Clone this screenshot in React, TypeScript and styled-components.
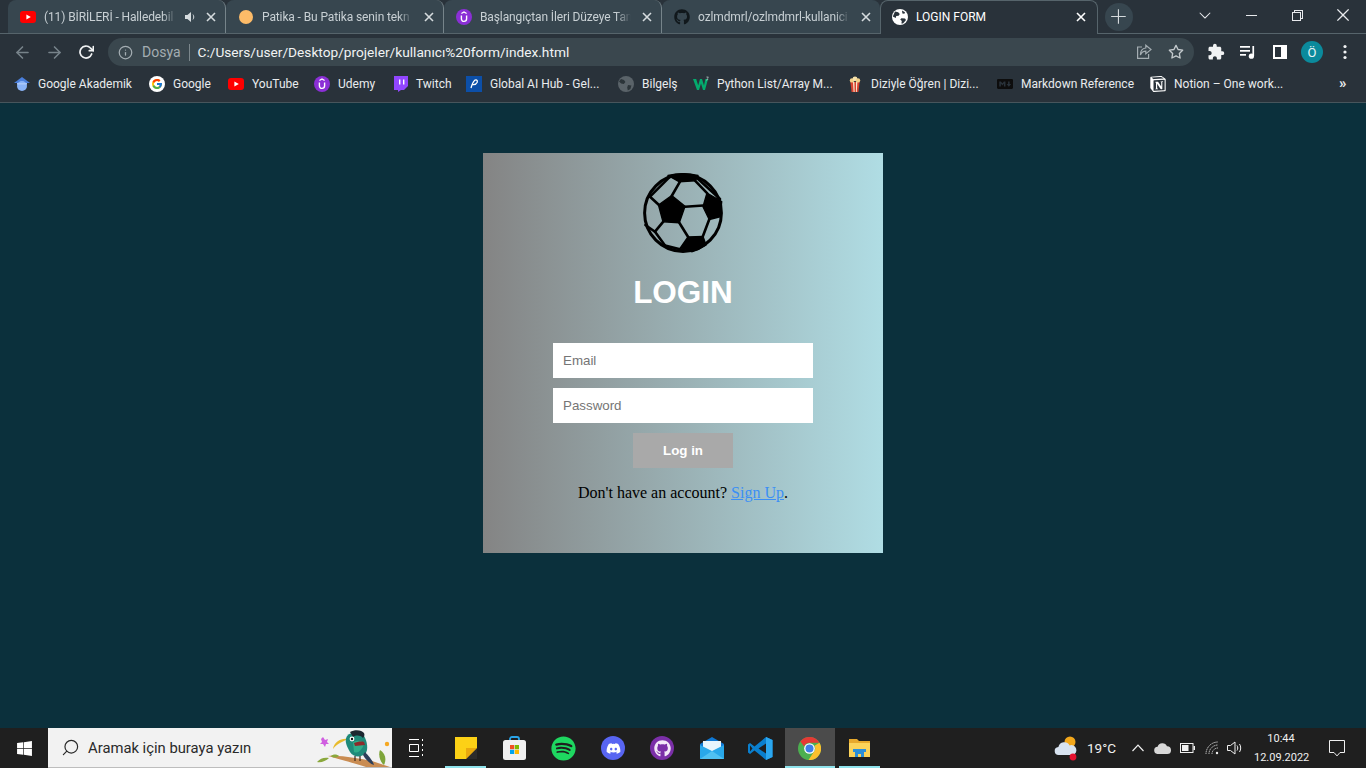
import React from "react";
import styled, { createGlobalStyle } from "styled-components";
import { FaGithub, FaSpotify, FaDiscord, FaWindows } from "react-icons/fa";
import { FcGoogle } from "react-icons/fc";
import { MdExtension } from "react-icons/md";
import { FiArrowLeft, FiArrowRight, FiInfo, FiStar, FiRotateCw, FiSearch } from "react-icons/fi";
import { SiNotion, SiMarkdown } from "react-icons/si";
import { VscChevronDown, VscChromeMinimize, VscChromeRestore, VscChromeClose, VscAdd } from "react-icons/vsc";

const Global = createGlobalStyle`
  html, body { margin: 0; padding: 0; height: 100%; overflow: hidden; }
  #root { height: 100%; }
  * { box-sizing: border-box; }
`;

const uiFont = `Roboto, "Noto Sans", "Liberation Sans", sans-serif`;

const Screen = styled.div`
  display: flex;
  flex-direction: column;
  height: 768px;
  width: 1366px;
  background: #0b303c;
  font-family: ${uiFont};
`;

const TabStrip = styled.div`
  display: flex;
  align-items: stretch;
  height: 34px;
  padding-left: 8px;
  background: #29323a;
  border-bottom: 1px solid #56646b;
  flex: none;
`;

const Tab = styled.div<{ $active?: boolean; $last?: boolean }>`
  display: flex;
  align-items: center;
  width: 218px;
  height: ${(p) => (p.$active ? "34px" : "33px")};
  padding: ${(p) => (p.$active ? "0 8px 2px 11px" : "0 6px 0 12px")};
  gap: 8px;
  background: ${(p) => (p.$active ? "#29323a" : "#37464f")};
  color: ${(p) => (p.$active ? "#ffffff" : "#c8d0d4")};
  border-radius: 8px 8px 0 0;
  border: ${(p) => (p.$active ? "1px solid #56646b" : "0")};
  border-bottom: 0;
  border-right: ${(p) =>
    p.$active ? "1px solid #56646b" : p.$last ? "0" : "1px solid #76848a"};
  font-size: 12px;
  white-space: nowrap;
  flex: none;
`;

const TabTitle = styled.span<{ $fade?: boolean }>`
  flex: 1;
  min-width: 0;
  ${(p) =>
    p.$fade
      ? "letter-spacing: -0.12px; mask-image: linear-gradient(to right, #000 90%, transparent 100%);"
      : ""}
`;

const TabClose = styled.span<{ $light?: boolean }>`
  display: flex;
  align-items: center;
  justify-content: center;
  width: 16px;
  height: 16px;
  flex: none;
  color: ${(p) => (p.$light ? "#ffffff" : "#d5dbde")};
`;

const NewTab = styled.div`
  display: flex;
  align-items: center;
  justify-content: center;
  width: 28px;
  height: 28px;
  margin: 3px 0 0 7px;
  border-radius: 50%;
  background: #37464f;
  color: #d4d9dc;
`;

const WindowControls = styled.div`
  display: flex;
  margin-left: auto;
  align-items: flex-start;
  color: #e8eaed;
`;

const WindowButton = styled.div`
  display: flex;
  align-items: center;
  justify-content: center;
  width: 46px;
  height: 30px;
`;

const Toolbar = styled.div`
  display: flex;
  align-items: center;
  height: 36px;
  padding: 0 0 0 6px;
  background: #29323a;
  flex: none;
`;

const NavButton = styled.div<{ $dim?: boolean; $w?: number }>`
  display: flex;
  align-items: center;
  justify-content: center;
  width: ${(p) => p.$w ?? 32}px;
  height: 28px;
  flex: none;
  color: ${(p) => (p.$dim ? "#77838a" : "#f1f3f4")};
`;

const Omnibox = styled.div`
  display: flex;
  align-items: center;
  width: 1086px;
  height: 28px;
  margin: 0 6px 0 6px;
  padding: 0 10px;
  border-radius: 14px;
  background: #3a474e;
  flex: none;
`;

const SiteLabel = styled.span`
  color: #a4adb2;
  font-size: 14px;
  margin-left: 9px;
  padding-right: 8px;
  border-right: 1px solid #7c878c;
  line-height: 17px;
`;

const Url = styled.span`
  color: #f1f3f4;
  margin-left: 8px;
  font-size: 13.7px;
  flex: 1;
`;

const OmniAction = styled.span`
  display: flex;
  margin-right: 16px;
`;

const Avatar = styled.div`
  display: flex;
  align-items: center;
  justify-content: center;
  width: 22px;
  height: 22px;
  border-radius: 50%;
  background: #0b8a9c;
  color: #e6f4f6;
  font-size: 13px;
`;

const Bookmarks = styled.div`
  display: flex;
  align-items: flex-start;
  height: 33px;
  padding: 6px 0 0 6px;
  background: #29323a;
  border-bottom: 1px solid #47555c;
  flex: none;
`;

const Bookmark = styled.div<{ $w: number }>`
  display: flex;
  align-items: center;
  gap: 8px;
  width: ${(p) => p.$w}px;
  height: 16px;
  padding-left: 8px;
  color: #e9ecee;
  font-size: 12px;
  white-space: nowrap;
  flex: none;
`;

const BookmarkIcon = styled.span`
  display: flex;
  width: 16px;
  height: 16px;
  align-items: center;
  justify-content: center;
  flex: none;
`;

const More = styled.span`
  color: #e9ecee;
  font-size: 15px;
  font-weight: 700;
  line-height: 14px;
`;

const Page = styled.main`
  flex: 1;
  display: flex;
  justify-content: center;
  align-items: flex-start;
  padding-top: 50px;
  background: #0b303c;
`;

const Card = styled.section`
  display: flex;
  flex-direction: column;
  align-items: center;
  width: 400px;
  height: 400px;
  padding-top: 20px;
  background: linear-gradient(to right, #848484, #b0dde4);
`;

const Title = styled.h1`
  margin: 19px 0 31px;
  height: 40px;
  font: bold 31.5px/40px "Liberation Sans", Arial, sans-serif;
  color: #ffffff;
`;

const Field = styled.input`
  display: block;
  width: 260px;
  height: 35px;
  margin-bottom: 10px;
  padding: 0 10px 1px;
  border: 0;
  outline: 0;
  background: #ffffff;
  font: 13.33px "Liberation Sans", Arial, sans-serif;
  &::placeholder { color: #757575; opacity: 1; }
`;

const Submit = styled.button`
  width: 100px;
  height: 35px;
  padding: 0 0 1px;
  border: 0;
  background: #a9a9a9;
  color: #ffffff;
  font: bold 13.33px "Liberation Sans", Arial, sans-serif;
`;

const Note = styled.p`
  margin: 16px 0 0;
  font: 16px/18px "Liberation Serif", "Times New Roman", serif;
  color: #000000;
`;

const NoteLink = styled.a`
  color: #3b8ff5;
  text-decoration: underline;
`;

const Taskbar = styled.footer`
  display: flex;
  align-items: stretch;
  height: 40px;
  background: #1f1f1f;
  flex: none;
`;

const StartButton = styled.div`
  display: flex;
  align-items: center;
  justify-content: center;
  width: 48px;
  color: #ffffff;
  flex: none;
`;

const SearchBox = styled.div`
  display: flex;
  align-items: center;
  position: relative;
  width: 344px;
  padding-left: 13px;
  background: #f2f2f2;
  border-bottom: 1px solid #bdbdbd;
  color: #2a2a2a;
  font-size: 14.8px;
  flex: none;
`;

const SearchText = styled.span`
  margin-left: 8px;
`;

const MirroredSearch = styled(FiSearch)`
  transform: scaleX(-1);
`;

const BirdArt = styled.svg`
  position: absolute;
  right: 0;
  top: 0;
`;

const TaskSlot = styled.div<{ $w?: number; $on?: boolean; $selected?: boolean }>`
  position: relative;
  display: flex;
  align-items: center;
  justify-content: center;
  width: ${(p) => p.$w ?? 49.2}px;
  background: ${(p) => (p.$selected ? "#4b4b4b" : "transparent")};
  flex: none;
  color: #fff;
  &::after {
    content: "";
    display: ${(p) => (p.$on ? "block" : "none")};
    position: absolute;
    left: ${(p) => (p.$selected ? "0" : "4px")};
    right: ${(p) => (p.$selected ? "0" : "4px")};
    bottom: 0;
    height: 2px;
    background: #8fe3ec;
  }
`;

const BadgeGlyph = styled.span`
  position: absolute;
  display: flex;
`;

const Tray = styled.div`
  display: flex;
  align-items: center;
  margin-left: auto;
  color: #f0f0f0;
`;

const TrayIcon = styled.span<{ $w: number }>`
  display: flex;
  align-items: center;
  justify-content: center;
  width: ${(p) => p.$w}px;
  flex: none;
`;

const Temp = styled.span`
  width: 48px;
  font-size: 13.5px;
  padding-left: 9px;
`;

const Clock = styled.div`
  width: 54px;
  margin-left: 9px;
  text-align: center;
  font-size: 11px;
  line-height: 19px;
  color: #f0f0f0;
  white-space: nowrap;
`;

const Notify = styled.div`
  display: flex;
  justify-content: center;
  width: 58px;
`;

/* ---------- drawings ---------- */

const Close = ({ size = 10, w = 1.6 }: { size?: number; w?: number }) => (
  <svg width={size} height={size} viewBox="0 0 10 10" stroke="currentColor" strokeWidth={w}>
    <path d="M1 1l8 8M9 1l-8 8" />
  </svg>
);

const YouTube = ({ w = 16, h = 12 }: { w?: number; h?: number }) => (
  <svg width={w} height={h} viewBox="0 0 16 12">
    <rect width="16" height="12" rx="3" fill="#f00" />
    <path d="M6.4 3.4v5.2L10.8 6z" fill="#fff" />
  </svg>
);

const Udemy = () => (
  <svg width="16" height="16" viewBox="0 0 16 16">
    <circle cx="8" cy="8" r="8" fill="#8b2fd6" />
    <path d="M5.4 6.6v3.2a2.6 2.6 0 0 0 5.2 0V6.6" fill="none" stroke="#fff" strokeWidth="1.4" />
    <path d="M5.4 4.6L8 3l2.6 1.6" fill="none" stroke="#fff" strokeWidth="1.2" />
  </svg>
);

const Globe = () => (
  <svg width="16" height="16" viewBox="0 0 16 16">
    <circle cx="8" cy="8" r="8" fill="#fff" />
    <path d="M3 2.6l3.2.6 1.6 1.8-1.2 1.8-2.4.2-.4 2-3-1.6zM9.4 9.2l3.6.2 1 1.6-3 3.6-1.6-.2.4-2.4-1.6-1.4zM10 1.6l3 1.6-.6 1.6-2-.2z" fill="#29323a" />
  </svg>
);

const Sound = () => (
  <svg width="11" height="12" viewBox="0 0 11 12" fill="#d5dbde">
    <path d="M1 4h2.4L7 1v10L3.4 8H1z" />
    <path d="M9 3.6c1 1.4 1 3.4 0 4.8" stroke="#d5dbde" strokeWidth="1" fill="none" />
  </svg>
);

const Scholar = () => (
  <svg width="16" height="16" viewBox="0 0 16 16">
    <path d="M8 1l8 6H0z" fill="#4a7fdc" />
    <circle cx="8" cy="10" r="5" fill="#8ab4f8" />
    <path d="M3 7h10v1.6H3z" fill="#a8c7fa" />
  </svg>
);

const GoogleMark = () => (
  <svg width="16" height="16" viewBox="0 0 16 16">
    <circle cx="8" cy="8" r="8" fill="#fff" />
    <foreignObject x="2" y="2" width="12" height="12">
      <FcGoogle size={12} />
    </foreignObject>
  </svg>
);

const Twitch = () => (
  <svg width="15" height="16" viewBox="0 0 15 16">
    <path d="M1 0h14v10l-4 4H8l-3 2v-2H1z" fill="#9146ff" />
    <path d="M6 3.5h1.4v5H6zM10 3.5h1.4v5H10z" fill="#fff" />
  </svg>
);

const W3Mark = () => (
  <svg width="16" height="16" viewBox="0 0 16 16">
    <path d="M0 3h3.2l2 6.4L7 3h2l2 6.4L12.4 3H15l-3 11h-2L8 7.6 6 14H4z" fill="#04aa6d" />
    <path d="M13.4 1h2l-1 1.2c.8.2.8 1.6-.4 1.8h-.8" fill="none" stroke="#d8e2e2" strokeWidth=".6" />
  </svg>
);

const GlobalAi = () => (
  <svg width="16" height="16" viewBox="0 0 16 16">
    <rect width="16" height="16" fill="#0c4fa8" />
    <path d="M5 12c.8-3 1.6-5.6 3.4-7.4 1.6-1.4 3.6-.4 2.8 1.6-.8 1.8-3 2.6-5 2.2" fill="none" stroke="#fff" strokeWidth="1.3" />
  </svg>
);

const Bilgels = () => (
  <svg width="16" height="16" viewBox="0 0 16 16">
    <circle cx="8" cy="8" r="8" fill="#5a6369" />
    <path d="M3 3l3 1 1.4 2-1.6 2-2.6-.4L1 5.6zM10 9l3.4.4-1 3.6-2.6 1.6-.6-3z" fill="#2b3439" />
  </svg>
);

const Popcorn = () => (
  <svg width="14" height="16" viewBox="0 0 14 16">
    <path d="M2.4 6h9.2L10.4 16H3.6z" fill="#d8432f" />
    <path d="M5 6h1.4l.2 10H5.6zM8 6h1.4l-.6 10H8z" fill="#f6e7cf" />
    <circle cx="4" cy="4.4" r="2.2" fill="#f3d38a" />
    <circle cx="7" cy="2.8" r="2.4" fill="#f6e2ab" />
    <circle cx="10" cy="4.4" r="2.2" fill="#f3d38a" />
  </svg>
);

const ShareBox = () => (
  <svg width="16" height="16" viewBox="0 0 16 16" fill="none" stroke="#a4adb2" strokeWidth="1.2">
    <path d="M6 3H1.6v11.4h11V10" />
    <path d="M9.8 1.2L15 5.6l-5.2 4.2V7.2C7.4 7.2 5.6 8.4 4.4 11c0-4 2-6.6 5.4-7z" />
  </svg>
);

const Ball = () => (
  <svg width="80" height="80" viewBox="0 0 80 80">
    <circle cx="40" cy="40" r="38.4" fill="none" stroke="#000" strokeWidth="3" />
    <g fill="#000" stroke="#000" strokeWidth="1.4" strokeLinejoin="round">
      <path d="M28.7 22.5L42 33.2 36.3 49.7 20 48.7 15.5 32z" />
      <path d="M64 20L78.7 28.7 77 43.7 66.3 46.6 60 33.7z" />
      <path d="M25 2.4Q40-1 55 2.4L52.5 7.7 36 8.7z" />
      <path d="M45 64L60 63.4 63 72 Q56 77 48.7 78.7L37 75.3z" />
    </g>
    <g fill="none" stroke="#000" strokeWidth="2.6" strokeLinecap="round">
      <path d="M28.7 23L37 8.7" />
      <path d="M52 7.7L64.3 20.3" />
      <path d="M42 33.7L60.3 32.5" />
      <path d="M36.3 49.7L45.3 64.3" />
      <path d="M66.3 46.3L59.7 63.7" />
      <path d="M16 32L7 23.7" />
      <path d="M20.3 48.7L12 58.7" />
      <path d="M12 58.7L2.4 52" />
      <path d="M12 58.7L22 72.5" />
      <path d="M22 72.5L40 77" />
      <path d="M27 3.7L7 23.7" />
      <path d="M54 5L77 26" />
    </g>
  </svg>
);

const Bird = () => (
  <BirdArt width="80" height="39" viewBox="0 0 80 39">
    <path d="M11 9l2 3 3-1-1 3 2 2-3 0-1 3-2-3-3 0 2-2-1-3z" fill="#d05fe0" />
    <circle cx="75" cy="16" r="2.2" fill="#f6a821" />
    <path d="M16 28c14-1 32 3 44 5l18 6H54c-12-4-28-8-38-11z" fill="#c98c52" />
    <path d="M5 34c3-4 8-5 12-4-3 3-8 5-12 4zM19 28c2-2 6-2 8 0-3 2-6 2-8 0z" fill="#8aa83c" />
    <path d="M68 22c5 3 7 9 4 15-4-3-6-10-4-15z" fill="#7ea53a" />
    <path d="M21 21c1-7 8-11 15-10-3 2-11 4-15 10z" fill="#e8bb2c" />
    <path d="M35 8c5-5 14-4 17 0 3 5 5 14 1 18-5 4-12 3-15-2-3-5-6-11-3-16z" fill="#1f8a7a" />
    <path d="M41 14c4-2 9-2 11 2-2 6-6 10-10 8z" fill="#2fae8a" />
    <path d="M38 4c5-3 12-2 14 1 1 2 0 4-1 5-3-3-7-3-10-1z" fill="#1c2730" />
    <path d="M42 15c3-1 7-2 10-1l1 3-10 1z" fill="#8c2b2b" />
    <circle cx="40" cy="11" r="2.4" fill="#fff" />
    <circle cx="40" cy="11" r="1.2" fill="#111" />
    <path d="M53 24c3 3 8 9 9 13-4-1-9-6-11-10z" fill="#2d3f5a" />
    <path d="M43 28v5M48 28v5" stroke="#3a2a20" strokeWidth="1.2" />
  </BirdArt>
);

const Sticky = () => (
  <svg width="22" height="22" viewBox="0 0 22 22">
    <path d="M0 0h22v11L11 22H0z" fill="#fcd116" />
    <path d="M22 11v11H11z" fill="#2b2b2b" />
    <path d="M22 11L11 22V11z" fill="#e9a90e" />
  </svg>
);

const Store = () => (
  <svg width="23" height="24" viewBox="0 0 23 24">
    <path d="M7 5V3A2 2 0 0 1 9 1h5a2 2 0 0 1 2 2v2" fill="none" stroke="#29a4e8" strokeWidth="1.8" />
    <rect y="4" width="23" height="20" rx="2.5" fill="#f1f1f1" />
    <rect x="7" y="9" width="4.2" height="4.2" fill="#f25022" />
    <rect x="11.8" y="9" width="4.2" height="4.2" fill="#7fba00" />
    <rect x="7" y="13.8" width="4.2" height="4.2" fill="#00a4ef" />
    <rect x="11.8" y="13.8" width="4.2" height="4.2" fill="#ffb900" />
  </svg>
);

const Mail = () => (
  <svg width="24" height="22" viewBox="0 0 24 22">
    <path d="M0 7L12 0l12 7v15H0z" fill="#0f78d4" />
    <path d="M3 4h18v9l-9 4-9-4z" fill="#e8f5fd" />
    <path d="M0 8l12 6 12-6v14H0z" fill="#29a8ea" />
    <path d="M0 22l12-8 12 8z" fill="#50c1f2" />
  </svg>
);

const VSCode = () => (
  <svg width="25" height="25" viewBox="0 0 100 100">
    <path d="M72 4l26 12v68L72 96 26 58 8 72 0 66V34l8-6 18 14z" fill="#0a7fce" />
    <path d="M72 4l26 12v68L72 96z" fill="#2ba7ef" />
    <path d="M72 30L42 50l30 20z" fill="#1f1f1f" />
    <path d="M8 38l10 12L8 62z" fill="#1f1f1f" />
  </svg>
);

const Chrome = () => (
  <svg width="23" height="23" viewBox="0 0 24 24">
    <circle cx="12" cy="12" r="12" fill="#4caf50" />
    <path d="M12 0a12 12 0 0 1 10.4 6H12a6 6 0 0 0-5.6 3.8L2.5 4.6A12 12 0 0 1 12 0z" fill="#e53935" />
    <path d="M22.4 6A12 12 0 0 1 11 24l5.2-8A6 6 0 0 0 17.2 9z" fill="#fbc02d" />
    <circle cx="12" cy="12" r="5.6" fill="#fff" />
    <circle cx="12" cy="12" r="4.2" fill="#3f7fe8" />
  </svg>
);

const Explorer = () => (
  <svg width="21" height="18" viewBox="0 0 21 18">
    <path d="M0 0h8l2 2h11v16H0z" fill="#e7a92c" />
    <path d="M0 4h21v14H0z" fill="#fbd35a" />
    <path d="M4 10h13v3h-2v5h-3v-3H9v3H6v-5H4z" fill="#2c8fd9" />
  </svg>
);

const Weather = () => (
  <svg width="24" height="26" viewBox="0 0 24 26">
    <circle cx="16" cy="7" r="5.5" fill="#f2a71b" />
    <path d="M5 20a4 4 0 0 1-.6-8 6 6 0 0 1 11.2-1.6A4.8 4.8 0 0 1 19 20z" fill="#d8e3f0" />
    <circle cx="19" cy="22" r="3.4" fill="#e5112f" />
  </svg>
);

const Cloud = () => (
  <svg width="17" height="11" viewBox="0 0 17 11">
    <path d="M4 11a3.6 3.6 0 0 1-.4-7.2A5 5 0 0 1 13 3.2 3.9 3.9 0 0 1 13.2 11z" fill="#d8d8d8" />
  </svg>
);

const Battery = () => (
  <svg width="15" height="10" viewBox="0 0 15 10">
    <rect x=".5" y=".5" width="12.5" height="9" fill="none" stroke="#f0f0f0" />
    <rect x="2" y="2" width="6.5" height="6" fill="#f0f0f0" />
    <rect x="13.5" y="3" width="1.5" height="4" fill="#f0f0f0" />
  </svg>
);

const Wifi = () => (
  <svg width="14" height="14" viewBox="0 0 14 14" fill="none" stroke="#c8c8c8" strokeWidth="1" strokeDasharray="1.4 .6">
    <path d="M1 13A12 12 0 0 1 13 1M4 13a9 9 0 0 1 9-9M7 13a6 6 0 0 1 6-6" />
    <circle cx="12" cy="12" r="1.2" fill="#f0f0f0" stroke="none" />
  </svg>
);

const Speaker = () => (
  <svg width="16" height="14" viewBox="0 0 16 14" fill="none" stroke="#f0f0f0">
    <path d="M.5 4.5h3L8 1v12L3.5 9.5h-3z" />
    <path d="M10 4.5c1 1.4 1 3.6 0 5M12.5 3c1.6 2.4 1.6 5.6 0 8" />
  </svg>
);

const Speech = () => (
  <svg width="16" height="17" viewBox="0 0 16 17" fill="none" stroke="#f0f0f0">
    <path d="M.5.5h15v12h-4.5l-3 3.4-3-3.4H.5z" />
  </svg>
);

const PlayList = () => (
  <svg width="16" height="14" viewBox="0 0 16 14" fill="#fff">
    <rect y="1" width="10" height="1.7" />
    <rect y="5" width="10" height="1.7" />
    <rect y="9" width="6" height="1.7" />
    <rect x="12.4" y="1" width="1.7" height="10" />
    <circle cx="11.4" cy="11.2" r="2.6" />
  </svg>
);

const SidePanel = () => (
  <svg width="14" height="14" viewBox="0 0 14 14">
    <path d="M0 0h14v14H0z" fill="#fff" />
    <path d="M2 2h6v10H2z" fill="#29323a" />
  </svg>
);

const Dots = () => (
  <svg width="4" height="16" viewBox="0 0 4 16" fill="#f1f3f4">
    <circle cx="2" cy="2.5" r="1.6" />
    <circle cx="2" cy="8" r="1.6" />
    <circle cx="2" cy="13.5" r="1.6" />
  </svg>
);

const tabs = [
  { icon: <YouTube />, title: "(11) BİRİLERİ - Halledebil", sound: true },
  { icon: <svg width="16" height="16"><circle cx="8" cy="8" r="7" fill="#fdbb68" /></svg>, title: "Patika - Bu Patika senin tekn" },
  { icon: <Udemy />, title: "Başlangıçtan İleri Düzeye Tam" },
  { icon: <FaGithub size={16} color="#11181c" />, title: "ozlmdmrl/ozlmdmrl-kullanici" },
];

const marks: { icon: React.ReactNode; label: string; w: number }[] = [
  { icon: <Scholar />, label: "Google Akademik", w: 135 },
  { icon: <GoogleMark />, label: "Google", w: 79 },
  { icon: <YouTube />, label: "YouTube", w: 86 },
  { icon: <Udemy />, label: "Udemy", w: 78 },
  { icon: <Twitch />, label: "Twitch", w: 74 },
  { icon: <GlobalAi />, label: "Global AI Hub - Gel...", w: 152 },
  { icon: <Bilgels />, label: "Bilgelş", w: 75 },
  { icon: <W3Mark />, label: "Python List/Array M...", w: 154 },
  { icon: <Popcorn />, label: "Diziyle Öğren | Dizi...", w: 150 },
  { icon: <SiMarkdown size={16} color="#0d0d0d" />, label: "Markdown Reference", w: 153 },
  { icon: <SiNotion size={16} color="#fff" />, label: "Notion – One work...", w: 197 },
];

export default function App() {
  return (
    <Screen>
      <Global />
      <TabStrip>
        {tabs.map((t, i) => (
          <Tab key={t.title} $last={i === 3}>
            {t.icon}
            <TabTitle $fade>{t.title}</TabTitle>
            {t.sound && <Sound />}
            <TabClose><Close /></TabClose>
          </Tab>
        ))}
        <Tab $active>
          <Globe />
          <TabTitle>LOGIN FORM</TabTitle>
          <TabClose $light><Close /></TabClose>
        </Tab>
        <NewTab><VscAdd size={18} /></NewTab>
        <WindowControls>
          <WindowButton><VscChevronDown size={18} /></WindowButton>
          <WindowButton><VscChromeMinimize size={16} /></WindowButton>
          <WindowButton><VscChromeRestore size={16} /></WindowButton>
          <WindowButton><VscChromeClose size={18} /></WindowButton>
        </WindowControls>
      </TabStrip>

      <Toolbar>
        <NavButton $dim><FiArrowLeft size={19} /></NavButton>
        <NavButton $dim><FiArrowRight size={19} /></NavButton>
        <NavButton><FiRotateCw size={16} strokeWidth={2.6} /></NavButton>
        <Omnibox>
          <FiInfo size={15} color="#a4adb2" />
          <SiteLabel>Dosya</SiteLabel>
          <Url>C:/Users/user/Desktop/projeler/kullanıcı%20form/index.html</Url>
          <OmniAction><ShareBox /></OmniAction>
          <FiStar size={16} color="#c4cacd" />
        </Omnibox>
        <NavButton><MdExtension size={18} /></NavButton>
        <NavButton><PlayList /></NavButton>
        <NavButton><SidePanel /></NavButton>
        <NavButton><Avatar>Ö</Avatar></NavButton>
        <NavButton $w={34}><Dots /></NavButton>
      </Toolbar>

      <Bookmarks>
        {marks.map((m) => (
          <Bookmark key={m.label} $w={m.w}>
            <BookmarkIcon>{m.icon}</BookmarkIcon>
            {m.label}
          </Bookmark>
        ))}
        <More>»</More>
      </Bookmarks>

      <Page>
        <Card>
          <Ball />
          <Title>LOGIN</Title>
          <Field placeholder="Email" />
          <Field placeholder="Password" />
          <Submit>Log in</Submit>
          <Note>
            Don't have an account? <NoteLink href="#">Sign Up</NoteLink>.
          </Note>
        </Card>
      </Page>

      <Taskbar>
        <StartButton><FaWindows size={17} /></StartButton>
        <SearchBox>
          <MirroredSearch size={19} strokeWidth={1.5} />
          <SearchText>Aramak için buraya yazın</SearchText>
          <Bird />
        </SearchBox>
        <TaskSlot $w={49}>
          <svg width="16" height="20" viewBox="0 0 16 20" fill="none" stroke="#fff">
            <path d="M0 1.5h10M0 18.5h10M.5 6.5h9v7h-9zM13.5 1v2M13.5 6v2M13.5 11v2M13.5 16v2" />
          </svg>
        </TaskSlot>
        <TaskSlot $on><Sticky /></TaskSlot>
        <TaskSlot><Store /></TaskSlot>
        <TaskSlot><FaSpotify size={25} color="#1ed760" /></TaskSlot>
        <TaskSlot>
          <svg width="24" height="24"><circle cx="12" cy="12" r="12" fill="#5865f2" /></svg>
          <BadgeGlyph><FaDiscord size={15} color="#fff" /></BadgeGlyph>
        </TaskSlot>
        <TaskSlot>
          <svg width="24" height="24"><circle cx="12" cy="12" r="12" fill="#7b2fa8" /></svg>
          <BadgeGlyph><FaGithub size={17} color="#f3e8f8" /></BadgeGlyph>
        </TaskSlot>
        <TaskSlot><Mail /></TaskSlot>
        <TaskSlot><VSCode /></TaskSlot>
        <TaskSlot $on $selected><Chrome /></TaskSlot>
        <TaskSlot $on><Explorer /></TaskSlot>
        <Tray>
          <TrayIcon $w={24}><Weather /></TrayIcon>
          <Temp>19°C</Temp>
          <TrayIcon $w={24}>
            <svg width="12" height="8" viewBox="0 0 12 8" fill="none" stroke="#f0f0f0" strokeWidth="1.2"><path d="M.5 7L6 1.2 11.5 7" /></svg>
          </TrayIcon>
          <TrayIcon $w={25}><Cloud /></TrayIcon>
          <TrayIcon $w={25}><Battery /></TrayIcon>
          <TrayIcon $w={24}><Wifi /></TrayIcon>
          <TrayIcon $w={21}><Speaker /></TrayIcon>
          <Clock>10:44<br />12.09.2022</Clock>
          <Notify><Speech /></Notify>
        </Tray>
      </Taskbar>
    </Screen>
  );
}
